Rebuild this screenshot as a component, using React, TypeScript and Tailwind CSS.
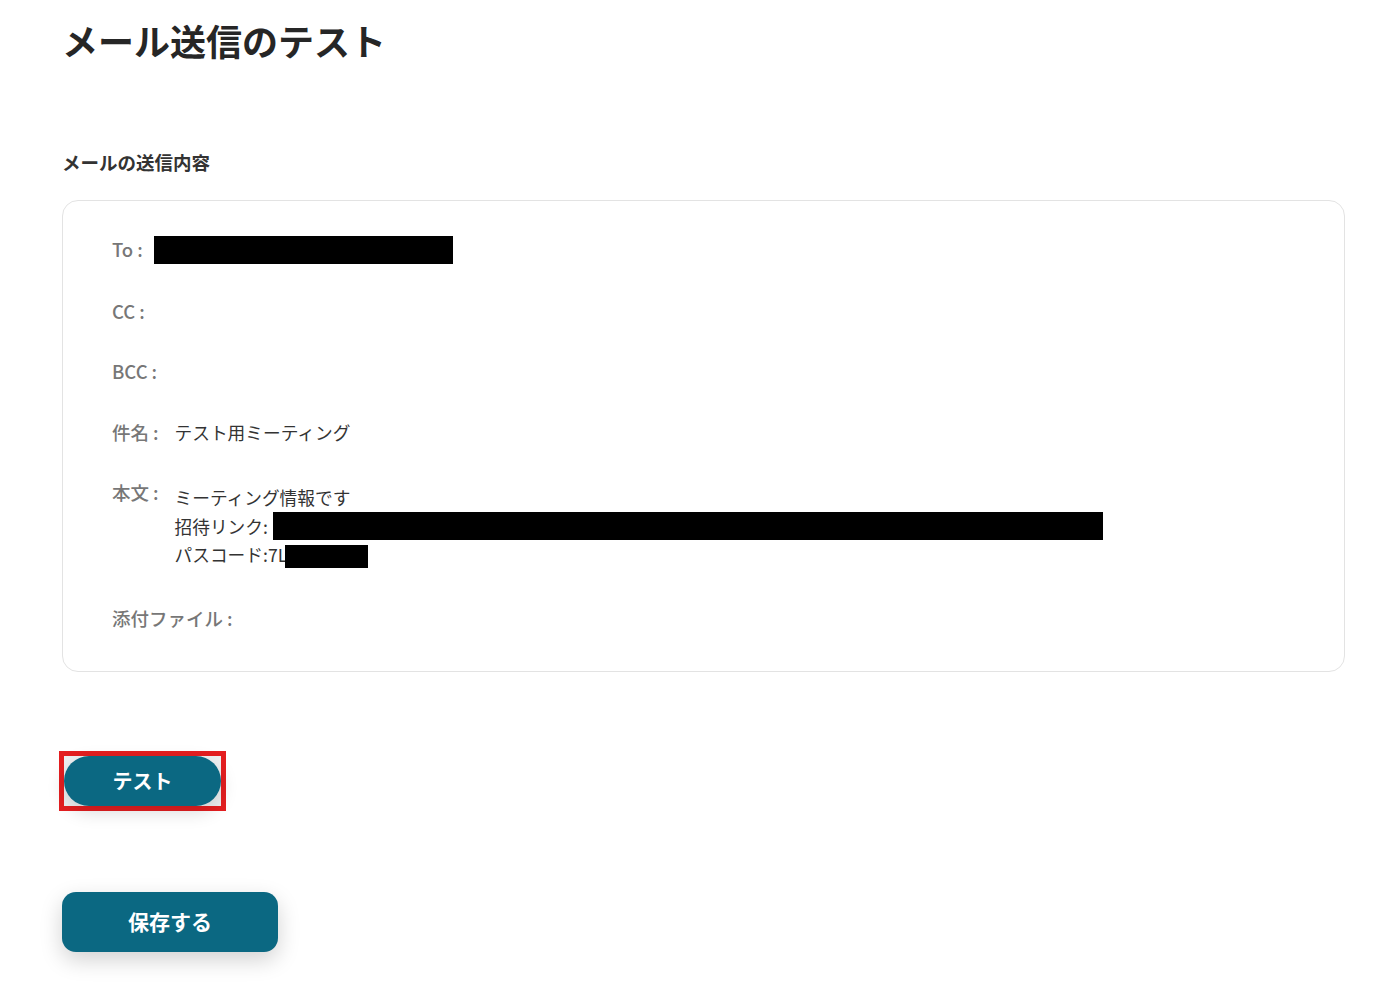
import React from 'react';

const rowLabel = 'shrink-0 text-[18.5px] leading-[28px] font-medium text-[#777777]';

function Label({ text }: { text: string }) {
  return (
    <span className={rowLabel}>
      {text}
      <span className="ml-[4px]">:</span>
    </span>
  );
}

export default function App() {
  return (
    <div className="min-h-screen bg-white pl-[62px] pr-[43px] pt-[16px] font-['Noto_Sans_CJK_JP','Noto_Sans',sans-serif]">
      <h1 className="text-[36px] leading-[48px] font-bold text-[#262626]">メール送信のテスト</h1>

      <h2 className="mt-[84px] text-[18.5px] leading-[28px] font-bold text-[#333333]">メールの送信内容</h2>

      <div className="mt-[24px] flex flex-col gap-[32.5px] rounded-2xl border border-[#e3e3e3] pl-[49px] pt-[34px] pb-[38.5px]">
        <div className="flex items-start gap-[11px]">
          <Label text="To" />
          <span className="mt-[1px] block h-[28px] w-[299px] bg-black" />
        </div>

        <div className="flex items-start gap-[16px]">
          <Label text="CC" />
        </div>

        <div className="flex items-start gap-[16px]">
          <Label text="BCC" />
        </div>

        <div className="flex items-start gap-[16px]">
          <Label text="件名" />
          <span className="text-[17.7px] leading-[28px] text-[#333333]">テスト用ミーティング</span>
        </div>

        <div className="flex items-start gap-[16px]">
          <Label text="本文" />
          <div className="pt-[5px] pb-[3px] text-[17.7px] leading-[28.5px] text-[#333333]">
            <div>ミーティング情報です</div>
            <div className="flex items-center">
              招待リンク:
              <span className="ml-[5px] block h-[28px] w-[830px] bg-black" />
            </div>
            <div className="flex items-center">
              パスコード:7L
              <span className="-ml-[2px] mt-[4px] block h-[23px] w-[83px] bg-black" />
            </div>
          </div>
        </div>

        <div className="flex items-start gap-[16px]">
          <Label text="添付ファイル" />
        </div>
      </div>

      <div className="mt-[79px] -ml-[3px] flex w-fit border-[5px] border-[#e41e20] bg-[#eef0f2]">
        <button className="flex h-[50px] w-[157px] items-center justify-center rounded-full bg-[#0b6882] text-[20px] font-bold text-white shadow-[0_6px_18px_rgba(0,0,0,0.15)]">
          テスト
        </button>
      </div>

      <button className="mt-[81px] flex h-[60px] w-[216px] items-center justify-center rounded-[14px] bg-[#0b6882] text-[21px] font-bold text-white shadow-[0_8px_22px_rgba(0,0,0,0.18)]">
        保存する
      </button>
    </div>
  );
}
